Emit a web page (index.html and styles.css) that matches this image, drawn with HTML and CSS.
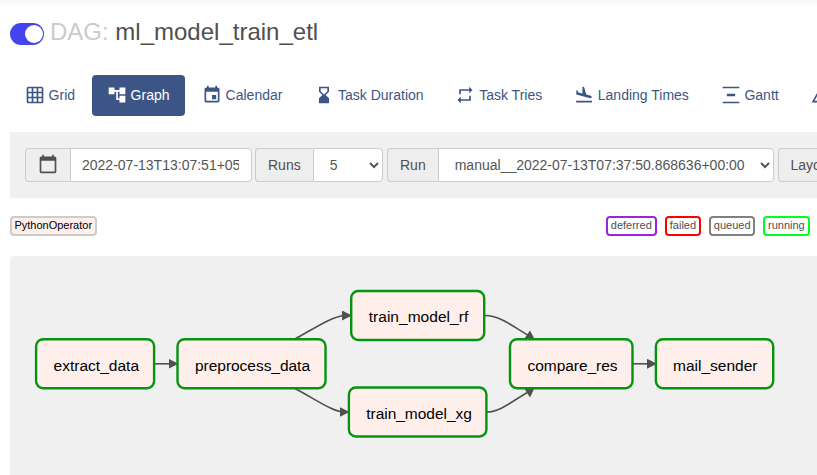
FILE: index.html
```html
<!DOCTYPE html>
<html lang="en">
<head>
<meta charset="utf-8">
<title>ml_model_train_etl - Graph</title>
<link rel="stylesheet" href="styles.css">
</head>
<body>
<header class="title-row">
  <span class="switch"><span class="knob"></span></span>
  <h1><span class="muted">DAG:</span> ml_model_train_etl</h1>
</header>
<nav class="tabs">
  <a class="tab"><svg viewBox="0 0 24 24"><path d="M20 2H4c-1.1 0-2 .9-2 2v16c0 1.1.9 2 2 2h16c1.1 0 2-.9 2-2V4c0-1.1-.9-2-2-2zM8 20H4v-4h4v4zm0-6H4v-4h4v4zm0-6H4V4h4v4zm6 12h-4v-4h4v4zm0-6h-4v-4h4v4zm0-6h-4V4h4v4zm6 12h-4v-4h4v4zm0-6h-4v-4h4v4zm0-6h-4V4h4v4z"/></svg>Grid</a>
  <a class="tab active"><svg viewBox="0 0 24 24"><path d="M22 11V3h-7v3H9V3H2v8h7V8h2v10h4v3h7v-8h-7v3h-2V8h2v3z"/></svg>Graph</a>
  <a class="tab"><svg viewBox="0 0 24 24"><path d="M17 12h-5v5h5v-5zM16 1v2H8V1H6v2H5c-1.11 0-1.99.9-1.99 2L3 19c0 1.1.89 2 2 2h14c1.1 0 2-.9 2-2V5c0-1.1-.9-2-2-2h-1V1h-2zm3 18H5V8h14v11z"/></svg>Calendar</a>
  <a class="tab"><svg viewBox="0 0 24 24"><path d="M18 22l-.01-6L14 12l3.99-4.01L18 2H6v6l4 4-4 3.99V22h12zM8 7.5V4h8v3.5l-4 4-4-4z"/></svg>Task Duration</a>
  <a class="tab"><svg viewBox="0 0 24 24"><path d="M7 7h10v3l4-4-4-4v3H5v6h2V7zm10 10H7v-3l-4 4 4 4v-3h12v-6h-2v4z"/></svg>Task Tries</a>
  <a class="tab"><svg viewBox="0 0 24 24"><path d="M2.5 19h19v2h-19zm16.84-3.15c.8.21 1.62-.26 1.84-1.06.21-.8-.26-1.62-1.06-1.84l-5.31-1.42-2.76-9.02L10.12 2v8.28L5.15 8.95l-.93-2.32-1.45-.39v5.17l16.57 4.44z"/></svg>Landing Times</a>
  <a class="tab"><svg viewBox="0 0 24 24"><path d="M22 2v2H2V2h20zM7 10.5v3h10v-3H7zM2 20v2h20v-2H2z"/></svg>Gantt</a>
  <a class="tab" aria-label="Details"><svg viewBox="0 0 24 24"><path d="M12 3L2 21h20L12 3zm1 5.9L18.6 19H13V8.900zm-2 0V19H5.400L11 8.900z"/></svg></a>
</nav>
<form class="filters">
  <div class="group date">
    <span class="addon"><svg viewBox="0 0 24 24"><path d="M20 3h-1V1h-2v2H7V1H5v2H4c-1.100 0-2 .9-2 2v16c0 1.100.9 2 2 2h16c1.100 0 2-.9 2-2V5c0-1.100-.9-2-2-2zm0 18H4V8h16v13z"/></svg></span>
    <input class="control" value="2022-07-13T13:07:51+05:30">
  </div>
  <div class="group runs">
    <span class="addon">Runs</span>
    <select class="control"><option>5</option></select>
  </div>
  <div class="group run">
    <span class="addon">Run</span>
    <select class="control"><option>manual__2022-07-13T07:37:50.868636+00:00</option></select>
  </div>
  <div class="group layout">
    <span class="addon">Layout</span>
  </div>
</form>
<div class="legend">
  <span class="tag operator">PythonOperator</span>
  <div class="states">
    <span class="tag deferred">deferred</span>
    <span class="tag failed">failed</span>
    <span class="tag queued">queued</span>
    <span class="tag running">running</span>
  </div>
</div>
<main class="graph">
  <svg viewBox="10 256 807 219" width="807" height="219">
    <defs>
      <marker id="arrow" viewBox="0 0 10 10" refX="9" refY="5" markerWidth="10" markerHeight="10" markerUnits="userSpaceOnUse" orient="0"><path d="M0 0L10 5L0 10z"/></marker>
    </defs>
    <g class="edges">
      <path marker-end="url(#arrow)" d="M155 363.800H177.500"/>
      <path marker-end="url(#arrow)" d="M295 339C315 328 333 315.500 346 315.500H351"/>
      <path marker-end="url(#arrow)" d="M295 388.500C315 399 333 412 344 412H348.500"/>
      <path d="M485 315.500C501 315.500 513 327 531 337"/>
      <path d="M487 412C501 412 513 400 531 390.500"/>
      <path marker-end="url(#arrow)" d="M633 363.800H656"/>
      <path class="head" d="M530 330.500L534.500 339H524z"/>
      <path class="head" d="M530 397.500L534.500 388H524z"/>
    </g>
    <g class="nodes">
      <rect x="36.100" y="339.200" width="118" height="49" rx="7"/>
      <rect x="177.500" y="339.200" width="148" height="49" rx="7"/>
      <rect x="351.200" y="291" width="133" height="49" rx="7"/>
      <rect x="348.900" y="387.500" width="137.500" height="49" rx="7"/>
      <rect x="510" y="339.200" width="122.500" height="49" rx="7"/>
      <rect x="655.900" y="339.200" width="117.300" height="49" rx="7"/>
    </g>
    <g class="labels">
      <text x="53.500" y="371" textLength="85.500">extract_data</text>
      <text x="195" y="371" textLength="115">preprocess_data</text>
      <text x="368.700" y="322" textLength="99.500">train_model_rf</text>
      <text x="366.300" y="419" textLength="105.500">train_model_xg</text>
      <text x="527.500" y="371" textLength="90">compare_res</text>
      <text x="673" y="371" textLength="84.500">mail_sender</text>
    </g>
  </svg>
</main>
</body>
</html>
```
FILE: styles.css
```css
* { box-sizing: border-box; }

body {
  margin: 0;
  padding-left: 10px;
  height: 475px;
  overflow: hidden;
  background: linear-gradient(#f8f8f8, #fff 8px) no-repeat #fff;
  color: #51504f;
  font: 14px/20px "Liberation Sans", Arial, sans-serif;
}

.title-row {
  display: flex;
  align-items: flex-start;
  height: 75px;
  padding-top: 19px;
}

.switch {
  width: 34px;
  height: 22px;
  margin: 4px 6px 0 0;
  padding: 2px 1px;
  border-radius: 11px;
  background: #4344ee;
  display: flex;
  justify-content: flex-end;
}

.knob {
  width: 18px;
  height: 18px;
  border-radius: 50%;
  background: #fff;
}

h1 {
  margin: 0;
  font-size: 24px;
  line-height: 26px;
  font-weight: normal;
}

.muted { color: #cbcbcb; }

.tabs {
  display: flex;
  gap: 2px;
  height: 57px;
  overflow: hidden;
}

.tab {
  display: flex;
  flex: none;
  align-items: center;
  gap: 3.9px;
  height: 41px;
  padding: 0 15px 2px 14.7px;
  border-radius: 4px;
  color: #3d5586;
}

.tab svg {
  width: 20px;
  height: 20px;
  fill: currentColor;
}

.tab.active {
  width: 93px;
  background: #3d5586;
  color: #fff;
}

.filters {
  display: flex;
  gap: 4px;
  height: 66px;
  padding: 16px 0 16px 15px;
  background: #f0f0f0;
  overflow: hidden;
}

.group {
  display: flex;
  flex: none;
  height: 34px;
}

.date { width: 227px; margin-right: -1px; }
.runs { width: 128px; }
.run { width: 387px; }
.layout { width: 70px; }

.addon {
  flex: none;
  display: flex;
  align-items: center;
  padding: 0 12px;
  border: 1px solid #ccc;
  border-right: 0;
  border-radius: 4px 0 0 4px;
  background: #eee;
}

.date .addon {
  width: 45px;
  padding: 0 0 2px 11.5px;
}

.layout .addon { padding-left: 11.5px; }

.addon svg {
  width: 20px;
  height: 20px;
  fill: currentColor;
}

.control {
  flex: 1;
  min-width: 0;
  height: 34px;
  margin: 0;
  padding: 6px 12px;
  border: 1px solid #ccc;
  border-radius: 0 4px 4px 0;
  background-color: #fff;
  color: #555;
  font: inherit;
}

.date .control { padding-left: 11px; }

.legend {
  display: flex;
  justify-content: space-between;
  height: 58px;
  padding: 18px 7px 0 0;
}

.states {
  display: flex;
  gap: 8px;
}

.tag {
  height: 20px;
  padding: 0 2.400px;
  border: 2px solid;
  border-radius: 4px;
  font-size: 11px;
  line-height: 15px;
  white-space: nowrap;
}

.operator {
  width: 87px;
  border-color: #ccc;
  background: #ffefeb;
  color: #000;
}

.states .tag {
  padding-left: 2.800px;
  color: #51504f;
}

.states .deferred { width: 51px; border-color: #9b25dc; }
.states .failed { width: 36px; border-color: #f00; }
.states .queued { width: 46px; border-color: #808080; }
.states .running { width: 47px; padding-left: 3px; border-color: #01ff1c; }

.graph {
  height: 219px;
  border-radius: 4px 0 0 0;
  background: #f0f0f0;
}

.graph svg { display: block; }

.edges path {
  fill: none;
  stroke: #51504f;
  stroke-width: 1.6;
}

.edges .head, marker path {
  fill: #51504f;
  stroke: none;
}

.nodes rect {
  fill: #ffefeb;
  stroke: #049410;
  stroke-width: 2.4;
}

.labels text {
  fill: #000;
  font-size: 15.5px;
}
```
